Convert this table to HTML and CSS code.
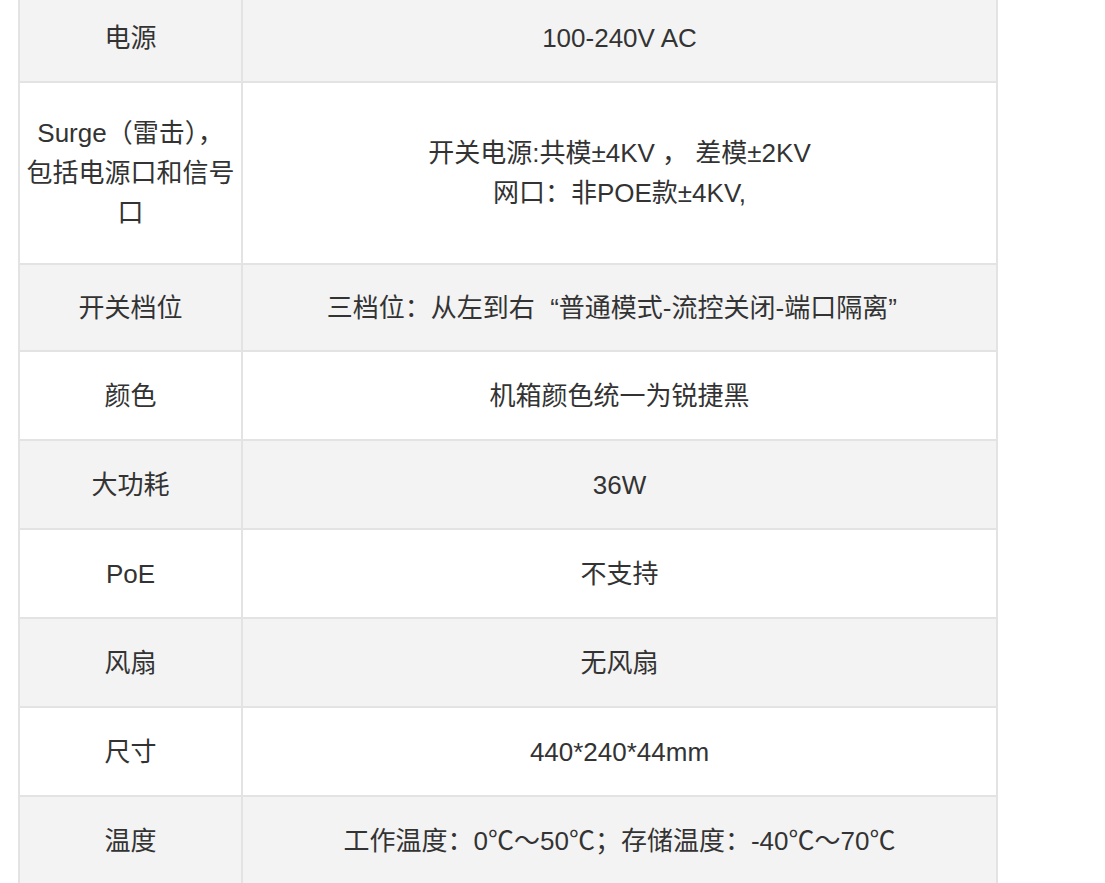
FILE: index.html
```html
<!DOCTYPE html>
<html lang="zh-CN">
<head>
<meta charset="utf-8">
<title>规格参数</title>
<link rel="stylesheet" href="styles.css">
</head>
<body>
<table class="spec">
  <colgroup><col class="c-label"><col class="c-value"></colgroup>
  <tbody>
    <tr class="odd first"><td>电源</td><td>100-240V AC</td></tr>
    <tr class="even tall"><td>Surge（雷击），<br>包括电源口和信号<br>口</td><td>开关电源:共模±4KV ， 差模±2KV<br>网口：非POE款±4KV,</td></tr>
    <tr class="odd short"><td>开关档位</td><td>三档位：从左到右<span class="q q-open">“</span>普通模式-流控关闭-端口隔离<span class="q q-close">”</span></td></tr>
    <tr class="even"><td>颜色</td><td>机箱颜色统一为锐捷黑</td></tr>
    <tr class="odd"><td>大功耗</td><td>36W</td></tr>
    <tr class="even"><td>PoE</td><td>不支持</td></tr>
    <tr class="odd"><td>风扇</td><td>无风扇</td></tr>
    <tr class="even"><td>尺寸</td><td>440*240*44mm</td></tr>
    <tr class="odd"><td>温度</td><td>工作温度：0℃～50℃；存储温度：-40℃～70℃</td></tr>
  </tbody>
</table>
</body>
</html>
```

FILE: styles.css
```css
html, body {
  margin: 0;
  padding: 0;
  background: #ffffff;
}

body {
  font-family: "Liberation Sans", "Noto Sans CJK SC", sans-serif;
  color: #333333;
  font-size: 26px;
  line-height: 40px;
  overflow: hidden;
}

.spec {
  margin: -8px 0 0 18px;
  width: 980px;
  border-collapse: collapse;
  table-layout: fixed;
}

.c-label { width: 223px; }

.spec td {
  border: 2px solid #e3e3e3;
  padding: 0 4px;
  height: 87px;
  text-align: center;
  vertical-align: middle;
}

.spec tr.odd td { background: #f3f3f3; }
.spec tr.even td { background: #ffffff; }

.spec tr.tall td { height: 180px; }
.spec tr.short td { height: 85px; }

.q {
  display: inline-block;
  width: 24px;
}

.q-open { text-align: right; }
.q-close { text-align: left; }
```
